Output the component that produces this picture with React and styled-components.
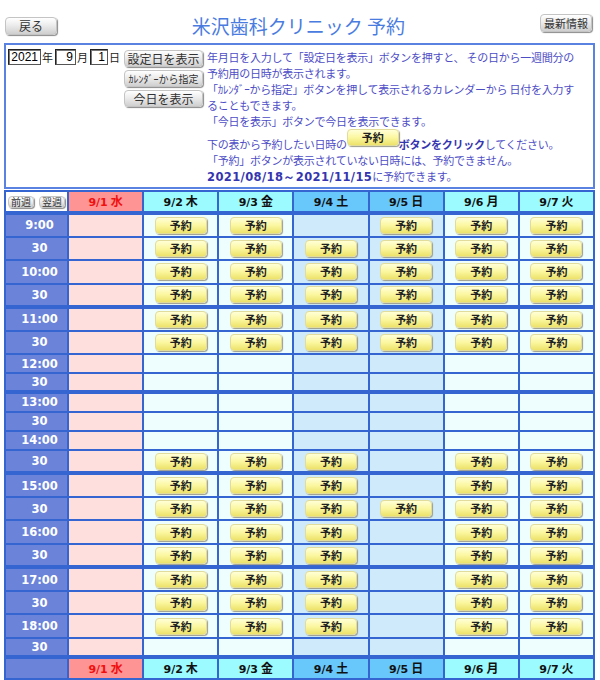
import React from 'react';
import styled, { createGlobalStyle } from 'styled-components';

const GlobalStyle = createGlobalStyle`
  html, body { margin: 0; padding: 0; background: #fff; }
  body { font-family: "Noto Sans CJK JP", "DejaVu Sans", sans-serif; }
  * { box-sizing: border-box; }
`;

const LINE = '#3565d0';

const Page = styled.div`
  width: 600px;
  padding: 0 5px 0 4px;
`;

const TopBar = styled.header`
  height: 43px;
  display: grid;
  grid-template-columns: 1fr auto 1fr;
  align-items: start;
  padding: 0 3px 0 1px;
`;

const Title = styled.h1`
  margin: 14px 0 0;
  font-size: 19px;
  line-height: 24px;
  font-weight: 400;
  color: #4a7ce0;
  font-family: "Noto Sans CJK JP", sans-serif;
  white-space: nowrap;
`;

const GreyButton = styled.button`
  width: ${p => p.$w}px;
  height: ${p => p.$h}px;
  margin-top: ${p => p.$top || 0}px;
  justify-self: ${p => p.$align || 'start'};
  padding: 0;
  border: 1px solid #c4c4c4;
  border-radius: 4px;
  background: linear-gradient(#ffffff 0%, #ececec 45%, #cfcfcf 100%);
  box-shadow: 1px 1px 1px #8a8a8a;
  font-family: "Noto Sans CJK JP", sans-serif;
  font-size: ${p => p.$size || 12}px;
  line-height: 1;
  color: #333;
  white-space: nowrap;
  cursor: pointer;
`;

const InfoBox = styled.section`
  border: 2px solid #5a82e0;
  height: 146px;
  display: flex;
  align-items: flex-start;
  padding: 4px 2px 0 2px;
`;

const DateRow = styled.div`
  display: flex;
  align-items: center;
  font-size: 11px;
  color: #222;
  line-height: 16px;
`;

const DateInput = styled.span`
  display: inline-block;
  width: ${p => p.$w}px;
  height: 16px;
  border: 1px solid #222;
  border-right-color: #555;
  border-bottom-color: #555;
  box-shadow: inset 1px 1px 0 #777;
  background: #fff;
  text-align: right;
  padding-right: 2px;
  font-family: "Liberation Sans", Arial, sans-serif;
  font-size: 12px;
  line-height: 14px;
  color: #000;
  margin-right: 1px;
`;

const Unit = styled.span`
  margin-right: ${p => p.$gap ?? 2}px;
`;

const ButtonStack = styled.div`
  display: flex;
  flex-direction: column;
  gap: 3px;
  margin-left: 4px;
  margin-top: 1px;
`;

const Notes = styled.div`
  margin-left: 4px;
  font-size: 11px;
  line-height: 16px;
  letter-spacing: -0.25px;
  color: #4d4dc6;
  font-family: "Noto Sans CJK JP", sans-serif;
`;

const Para = styled.div`
  margin-top: ${p => p.$gap || 0}px;
`;

const Line = styled.div`
  white-space: nowrap;
`;

const Strong = styled.b`
  color: #3535b0;
  font-weight: 700;
`;

const DateSpan = styled.b`
  color: #3535b0;
  font-family: "DejaVu Sans", sans-serif;
  font-weight: 700;
  font-size: 11.5px;
  letter-spacing: 0.4px;
`;

const ReserveButton = styled.button`
  display: inline-block;
  width: 52px;
  height: 17px;
  padding: 0;
  margin: ${p => (p.$inline ? '-2px 0 0' : '0')};
  border: 1px solid #e2dc9c;
  border-radius: 4px;
  background: linear-gradient(#ffffd6 0%, #fbf7a0 50%, #ece26a 100%);
  box-shadow: 1px 1px 1px #9c9c8c;
  font-family: "Noto Sans CJK JP", sans-serif;
  font-weight: 700;
  font-size: 11px;
  line-height: 1;
  letter-spacing: 0;
  color: #222;
  cursor: pointer;
  vertical-align: ${p => (p.$inline ? '7px' : 'middle')};
`;

const Grid = styled.table`
  width: 591px;
  margin-top: 1px;
  border-collapse: collapse;
  table-layout: fixed;
  border: 2px solid ${LINE};
`;

const headBg = { past: '#ff9494', weekday: '#9cfbff', weekend: '#68c8fc' };
const bodyBg = { past: '#ffdede', weekday: '#eefeff', weekend: '#cfebfb' };

const SEP = 4;

const HeadCell = styled.th`
  height: 22px;
  padding: 0;
  border: 2px solid ${LINE};
  border-top-width: ${p => (p.$sepTop ? SEP : 2)}px;
  border-bottom-width: ${p => (p.$sepBottom ? SEP : 2)}px;
  background: ${p => headBg[p.$kind]};
  color: ${p => (p.$kind === 'past' ? '#f01010' : '#111')};
  font-family: "DejaVu Sans", "Noto Sans CJK JP", sans-serif;
  font-weight: 700;
  font-size: 11px;
  line-height: 14px;
  text-align: center;
  white-space: nowrap;
`;

const CornerCell = styled.th`
  padding: 0;
  border: 2px solid ${LINE};
  border-top-width: ${p => (p.$sepTop ? SEP : 2)}px;
  border-bottom-width: ${p => (p.$sepBottom ? SEP : 2)}px;
  background: ${p => (p.$blue ? '#6b84d9' : '#fff')};
  line-height: 0;
`;

const WeekNav = styled.div`
  display: flex;
  justify-content: center;
  gap: 5px;
`;

const Wd = styled.span`
  font-family: "Noto Sans CJK JP", sans-serif;
  font-size: 12px;
  margin-left: 3px;
`;

const TimeCell = styled.th`
  padding: 0 0 0 6px;
  border: 2px solid ${LINE};
  border-top-width: ${p => (p.$sep ? SEP : 2)}px;
  background: #6b84d9;
  color: #fff;
  font-family: "DejaVu Sans", sans-serif;
  font-weight: 700;
  font-size: 11.5px;
  line-height: 14px;
  text-align: center;
`;

const SlotCell = styled.td`
  padding: 0;
  border: 2px solid ${LINE};
  border-top-width: ${p => (p.$sep ? SEP : 2)}px;
  background: ${p => bodyBg[p.$kind]};
  text-align: center;
  line-height: 0;
  font-size: 0;
`;

const Row = styled.tr`
  height: ${p => (p.$tall ? 23.5 : 19.2)}px;
`;

const days = [
  { d: '9/1', w: '水', kind: 'past' },
  { d: '9/2', w: '木', kind: 'weekday' },
  { d: '9/3', w: '金', kind: 'weekday' },
  { d: '9/4', w: '土', kind: 'weekend' },
  { d: '9/5', w: '日', kind: 'weekend' },
  { d: '9/6', w: '月', kind: 'weekday' },
  { d: '9/7', w: '火', kind: 'weekday' },
];

const ALL = [1, 2, 3, 4, 5, 6];
const NO5 = [1, 2, 3, 5, 6];
const slots = [
  ['9:00', [1, 2, 4, 5, 6]],
  ['30', ALL],
  ['10:00', ALL],
  ['30', ALL],
  ['11:00', ALL],
  ['30', ALL],
  ['12:00', []],
  ['30', []],
  ['13:00', []],
  ['30', []],
  ['14:00', []],
  ['30', NO5],
  ['15:00', NO5],
  ['30', ALL],
  ['16:00', NO5],
  ['30', NO5],
  ['17:00', NO5],
  ['30', NO5],
  ['18:00', NO5],
  ['30', []],
];

function DayHeaders({ sepTop, sepBottom }) {
  return days.map(day => (
    <HeadCell key={day.d} $kind={day.kind} $sepTop={sepTop} $sepBottom={sepBottom}>
      {day.d}
      <Wd>{day.w}</Wd>
    </HeadCell>
  ));
}

export default function App() {
  return (
    <Page>
      <GlobalStyle />
      <TopBar>
        <GreyButton $w={52} $h={18} $top={17}>戻る</GreyButton>
        <Title>米沢歯科クリニック 予約</Title>
        <GreyButton $w={52} $h={18} $top={14} $align="end" $size={11}>最新情報</GreyButton>
      </TopBar>

      <InfoBox>
        <DateRow>
          <DateInput $w={33}>2021</DateInput>
          <Unit>年</Unit>
          <DateInput $w={21}>9</DateInput>
          <Unit>月</Unit>
          <DateInput $w={18}>1</DateInput>
          <Unit $gap={0}>日</Unit>
        </DateRow>
        <ButtonStack>
          <GreyButton $w={79} $h={17}>設定日を表示</GreyButton>
          <GreyButton $w={79} $h={17} $size={10}>ｶﾚﾝﾀﾞｰから指定</GreyButton>
          <GreyButton $w={79} $h={17}>今日を表示</GreyButton>
        </ButtonStack>
        <Notes>
          <Para>
            <Line>年月日を入力して「設定日を表示」ボタンを押すと、 その日から一週間分の</Line>
            <Line>予約用の日時が表示されます。</Line>
            <Line>「ｶﾚﾝﾀﾞｰから指定」ボタンを押して表示されるカレンダーから 日付を入力す</Line>
            <Line>ることもできます。</Line>
            <Line>「今日を表示」ボタンで今日を表示できます。</Line>
          </Para>
          <Para $gap={2}>
            <Line>
              下の表から予約したい日時の<ReserveButton $inline>予約</ReserveButton>
              <Strong>ボタンをクリック</Strong>してください。
            </Line>
            <Line>「予約」ボタンが表示されていない日時には、予約できません。</Line>
            <Line>
              <DateSpan>2021/08/18～2021/11/15</DateSpan>に予約できます。
            </Line>
          </Para>
        </Notes>
      </InfoBox>

      <Grid>
        <colgroup>
          <col style={{ width: 63 }} />
        </colgroup>
        <thead>
          <tr>
            <CornerCell $sepBottom>
              <WeekNav>
                <GreyButton $w={26} $h={12} $size={10}>前週</GreyButton>
                <GreyButton $w={26} $h={12} $size={10}>翌週</GreyButton>
              </WeekNav>
            </CornerCell>
            <DayHeaders sepBottom />
          </tr>
        </thead>
        <tbody>
          {slots.map(([t, open], i) => {
            const sep = i > 0 && i % 4 === 0;
            return (
              <Row key={i} $tall={open.length > 0}>
                <TimeCell $sep={sep}>{t}</TimeCell>
                {days.map((day, c) => (
                  <SlotCell key={c} $kind={day.kind} $sep={sep}>
                    {open.includes(c) && <ReserveButton>予約</ReserveButton>}
                  </SlotCell>
                ))}
              </Row>
            );
          })}
        </tbody>
        <tfoot>
          <tr>
            <CornerCell $blue $sepTop />
            <DayHeaders sepTop />
          </tr>
        </tfoot>
      </Grid>
    </Page>
  );
}
